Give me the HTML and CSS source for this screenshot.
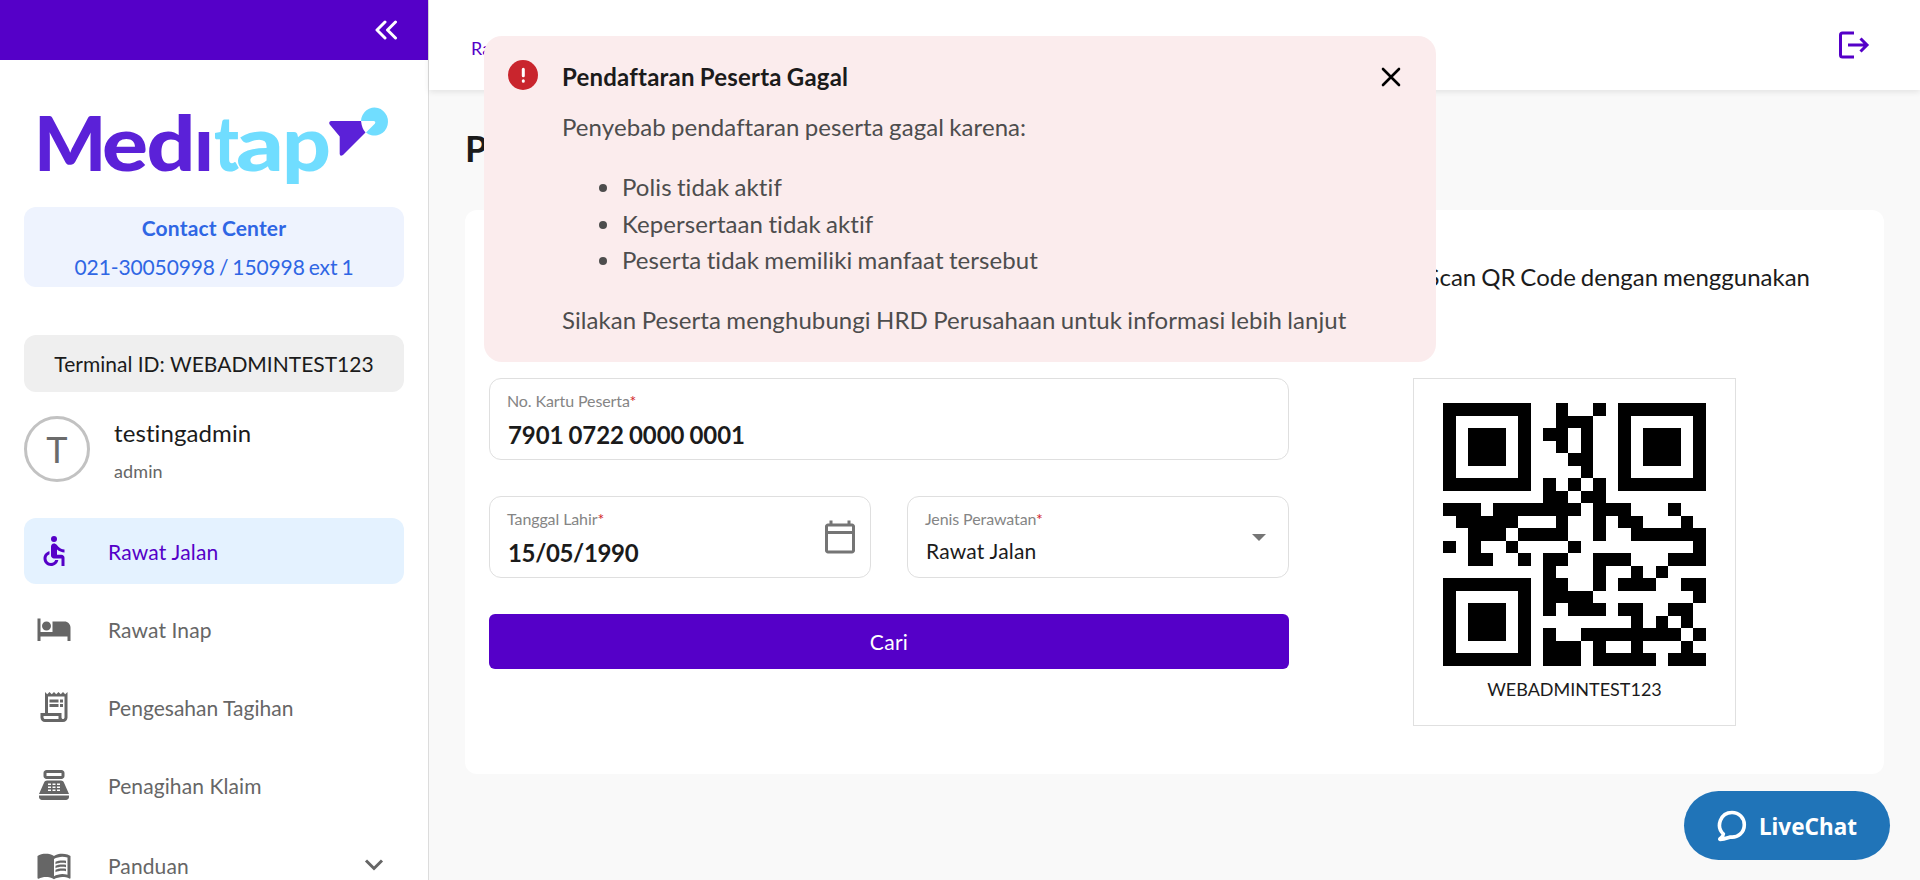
FILE: index.html
```html
<!DOCTYPE html>
<html lang="id">
<head>
<meta charset="utf-8">
<title>Meditap</title>
<link rel="stylesheet" href="styles.css">
</head>
<body>
<div class="app">
  <aside class="sidebar">
    <div class="sidebar-top">
      <svg class="collapse" width="24" height="20" viewBox="0 0 24 20"><path d="M11 2 3 10l8 8M21.500 2l-8 8 8 8"/></svg>
    </div>
    <div class="sidebar-body">
      <svg class="logo" width="380" height="98" viewBox="24 94 380 98" role="img" aria-label="Meditap">
        <text class="logo-medi" y="171"><tspan x="34">M</tspan><tspan x="102" textLength="46" lengthAdjust="spacingAndGlyphs">e</tspan><tspan x="146.500" textLength="49" lengthAdjust="spacingAndGlyphs">d</tspan><tspan x="194">ı</tspan></text>
        <text class="logo-tap" y="171"><tspan x="214" textLength="25" lengthAdjust="spacingAndGlyphs">t</tspan><tspan x="236" textLength="48" lengthAdjust="spacingAndGlyphs">a</tspan><tspan x="282" textLength="49" lengthAdjust="spacingAndGlyphs">p</tspan></text>
        <path class="logo-dark" d="M331 121h30q1 8 4.500 11.500l-22.500 22.500q-3 2-3.300-1v-17.500l-10-12q-1.500-2.500 1.300-3.500z"/>
        <path class="logo-light" d="M361 121a13.500 14 0 1 1 5 11.500l9-9q1-2.500-1.500-2.500z"/>
      </svg>
      <div class="contact"><strong>Contact Center</strong><span>021-30050998 / 150998 ext 1</span></div>
      <div class="terminal">Terminal ID: WEBADMINTEST123</div>
      <div class="user">
        <div class="avatar">T</div>
        <div class="user-info"><span class="user-name">testingadmin</span><span class="user-role">admin</span></div>
      </div>
      <nav class="menu">
        <a class="item active">
          <svg class="mi" viewBox="0 0 24 24"><circle cx="12" cy="4" r="2"/><path d="M19 13v-2c-1.540.02-3.090-.75-4.070-1.830l-1.290-1.430c-.17-.19-.38-.34-.61-.45-.01 0-.01-.01-.02-.01H13c-.35-.2-.75-.3-1.190-.26C10.760 7.110 10 8.040 10 9.090V15c0 1.100.9 2 2 2h5v5h2v-5.500c0-1.100-.9-2-2-2h-3v-3.450c1.290 1.070 3.250 1.940 5 1.950zm-6.170 5c-.41 1.160-1.520 2-2.830 2-1.660 0-3-1.340-3-3 0-1.310.84-2.410 2-2.830V12.100c-2.280.46-4 2.480-4 4.900 0 2.760 2.240 5 5 5 2.420 0 4.440-1.720 4.900-4h-2.070z"/></svg>
          <span>Rawat Jalan</span></a>
        <a class="item">
          <svg class="mi" viewBox="0 0 24 24"><path d="M7 13c1.660 0 3-1.340 3-3S8.660 7 7 7s-3 1.340-3 3 1.340 3 3 3zm12-6h-8v7H3V5H1v15h2v-3h18v3h2v-9c0-2.210-1.790-4-4-4z"/></svg>
          <span>Rawat Inap</span></a>
        <a class="item">
          <svg class="mi" viewBox="0 0 24 24"><path d="M19.500 3.500 18 2l-1.500 1.500L15 2l-1.500 1.500L12 2l-1.500 1.500L9 2 7.500 3.500 6 2v14H3v3c0 1.660 1.340 3 3 3h12c1.660 0 3-1.340 3-3V2l-1.500 1.500zM15 20H6c-.55 0-1-.45-1-1v-1h10v2zm4-1c0 .55-.45 1-1 1s-1-.45-1-1v-3H8V5h11v14z"/><path d="M9 7h6v2H9zM16 7h2v2h-2zM9 10h6v2H9zM16 10h2v2h-2z"/></svg>
          <span class="tight">Pengesahan Tagihan</span></a>
        <a class="item">
          <svg class="mi" viewBox="0 0 24 24"><path fill-rule="evenodd" d="M17 2H7c-1.100 0-2 .9-2 2v2c0 1.100.9 2 2 2h10c1.100 0 2-.9 2-2V4c0-1.100-.9-2-2-2zm0 4H7V4h10v2zm3 16H4c-1.100 0-2-.9-2-2v-1h20v1c0 1.100-.9 2-2 2zM18.530 10.190C18.210 9.470 17.490 9 16.700 9H7.300c-.79 0-1.510.47-1.830 1.190L2 18h20zM8 11h2v1H8zm3 0h2v1h-2zm3 0h2v1h-2zM8 13h2v1H8zm3 0h2v1h-2zm3 0h2v1h-2zM8 15h2v1H8zm3 0h2v1h-2zm3 0h2v1h-2z"/></svg>
          <span>Penagihan Klaim</span></a>
        <a class="item group">
          <svg class="mi" viewBox="0 0 24 24"><path d="M21 5c-1.110-.35-2.330-.5-3.500-.5-1.950 0-4.050.4-5.500 1.500-1.450-1.100-3.550-1.500-5.500-1.500S2.450 4.900 1 6v14.650c0 .25.25.5.5.5.1 0 .15-.05.25-.05C3.100 20.450 5.050 20 6.500 20c1.950 0 4.050.4 5.500 1.500 1.350-.85 3.800-1.500 5.500-1.500 1.650 0 3.350.3 4.750 1.050.1.05.15.05.25.05.25 0 .5-.25.5-.5V6c-.6-.45-1.250-.75-2-1zm0 13.500c-1.100-.35-2.300-.5-3.500-.5-1.700 0-4.150.65-5.500 1.500V8c1.350-.85 3.800-1.500 5.500-1.500 1.200 0 2.400.15 3.500.5v11.500z"/><path d="M17.500 10.500c.88 0 1.730.09 2.500.26V9.240c-.79-.15-1.640-.24-2.500-.24-1.700 0-3.240.29-4.500.83v1.660c1.130-.64 2.700-.99 4.500-.99zM13 12.490v1.660c1.130-.64 2.700-.99 4.500-.99.88 0 1.730.09 2.500.26V11.900c-.79-.15-1.640-.24-2.500-.24-1.700 0-3.240.3-4.500.83zM17.500 14.330c-1.700 0-3.240.29-4.500.83v1.660c1.130-.64 2.700-.99 4.500-.99.88 0 1.730.09 2.500.26v-1.520c-.79-.16-1.640-.24-2.500-.24z"/></svg>
          <span>Panduan</span>
          <svg class="chev" width="20" height="14" viewBox="0 0 20 14"><path d="m2 2.500 8 8 8-8"/></svg></a>
      </nav>
    </div>
  </aside>

  <div class="main">
    <header class="topbar">
      <span class="crumb">Rawat Jalan</span>
      <svg class="logout" width="36" height="36" viewBox="0 0 36 36"><path d="M18 6H6.500Q4.500 6 4.500 8v20q0 2 2 2H18"/><path d="M12 18h19M24.500 11.500 31 18l-6.500 6.500"/></svg>
    </header>
    <main class="content">
      <h1 class="title">Pendaftaran Peserta</h1>
      <section class="card">
        <form class="form">
          <div class="field wide"><label>No. Kartu Peserta<em>*</em></label><b>7901 0722 0000 0001</b></div>
          <div class="field"><label>Tanggal Lahir<em>*</em></label><b class="date">15/05/1990</b>
            <svg class="cal" viewBox="0 0 24 24"><path d="M20 3h-1V1h-2v2H7V1H5v2H4c-1.100 0-2 .9-2 2v16c0 1.100.9 2 2 2h16c1.100 0 2-.9 2-2V5c0-1.100-.9-2-2-2zm0 18H4V10h16v11zm0-13H4V5h16v3z"/></svg>
          </div>
          <div class="field"><label>Jenis Perawatan<em>*</em></label><span class="sel">Rawat Jalan</span>
            <svg class="drop" viewBox="0 0 14 7"><path d="M0 0h14L7 7z"/></svg>
          </div>
          <button class="btn wide" type="button">Cari</button>
        </form>
        <div class="scan">
          <p class="scan-text">Scan QR Code dengan menggunakan</p>
          <div class="qr-box">
            <svg id="qr" width="263" height="263" viewBox="0 0 263 263"></svg>
            <span>WEBADMINTEST123</span>
          </div>
        </div>
      </section>
    </main>
  </div>
</div>

<div class="alert" role="alert">
  <svg class="alert-icon" width="30" height="30" viewBox="0 0 30 30"><circle cx="15" cy="15" r="15"/><path d="M15.300 9.200v6.500M15.300 20.800v.4"/></svg>
  <div class="alert-body">
    <strong>Pendaftaran Peserta Gagal</strong>
    <p>Penyebab pendaftaran peserta gagal karena:</p>
    <ul><li>Polis tidak aktif</li><li>Kepersertaan tidak aktif</li><li>Peserta tidak memiliki manfaat tersebut</li></ul>
    <p>Silakan Peserta menghubungi HRD Perusahaan untuk informasi lebih lanjut</p>
  </div>
  <svg class="alert-close" width="20" height="20" viewBox="0 0 20 20"><path d="m2 2 16 16M18 2 2 18"/></svg>
</div>

<div class="chat">
  <svg width="30" height="32" viewBox="0 0 30 32"><path d="M6.400 24C-1.500 16.500 3.500 2.500 15 2.500c7 0 12.300 5.500 12.300 12.200C27.300 22.500 21 28 13.300 27c-3 1-6.500 2.500-10.300 2.400C2 28.600 6.200 27.500 6.400 24z"/></svg>
  <span>LiveChat</span>
</div>
<script src="qr.js"></script>
</body>
</html>
```

FILE: styles.css
```css
* { box-sizing: border-box; }
body { margin: 0; height: 880px; overflow: hidden; font-family: Lato, "Open Sans", sans-serif; font-size: 21px; color: #1b1b1b; background: #f9f9f9; font-variant-ligatures: none; }
p, ul, h1 { margin: 0; }
.app { display: flex; height: 880px; }

.sidebar { width: 429px; flex: none; background: #fff; border-right: 1px solid #dcdcdc; overflow: hidden; }
.sidebar-top { height: 60px; background: #5500c8; display: flex; justify-content: flex-end; align-items: center; padding-right: 30px; }
.collapse { fill: none; stroke: #fff; stroke-width: 3; stroke-linecap: round; stroke-linejoin: round; }
.sidebar-body { padding: 34px 24px 0; display: flex; flex-direction: column; }
.logo { display: block; overflow: visible; }
.logo text { font: 900 76px Lato, sans-serif; }
.logo-medi, .logo-dark { fill: #5b21d8; }
.logo-tap, .logo-light { fill: #70ddff; }
.contact { margin-top: 15px; height: 80px; border-radius: 12px; background: #eef3fe; color: #2f66e4; display: flex; flex-direction: column; align-items: center; justify-content: center; gap: 7px; line-height: 32px; }
.contact strong { letter-spacing: .15px; }
.contact span { letter-spacing: -.12px; word-spacing: -1.200px; }
.terminal { margin-top: 48px; height: 57px; border-radius: 12px; background: #efefef; display: flex; align-items: center; justify-content: center; }
.user { display: flex; gap: 24px; align-items: center; margin-top: 24px; height: 66px; }
.avatar { width: 66px; height: 66px; border: 3px solid #c2c2c2; border-radius: 50%; display: flex; align-items: center; justify-content: center; font-size: 36px; color: #6b6b6b; }
.user-info { display: flex; flex-direction: column; gap: 11px; padding-top: 4px; }
.user-name { font-size: 24px; line-height: 29px; letter-spacing: .1px; }
.user-role { font-size: 18px; line-height: 27px; color: #666; letter-spacing: .1px; }
.menu { margin-top: 36px; display: flex; flex-direction: column; gap: 12px; }
.item { height: 66px; display: flex; align-items: center; padding: 0 20px 0 12px; border-radius: 12px; color: #666; letter-spacing: .1px; }
.item span { margin-left: 36px; flex: 1; }
.item .tight { letter-spacing: .02px; }
.item.active { background: #e4f2ff; color: #5500c8; letter-spacing: .2px; }
.item.group { margin-top: 2px; }
.mi { width: 36px; height: 36px; fill: currentColor; }
.chev { fill: none; stroke: #666; stroke-width: 3; }

.main { flex: 1; display: flex; flex-direction: column; }
.topbar { height: 90px; flex: none; background: #fff; box-shadow: 0 2px 6px rgba(0, 0, 0, .09); display: flex; align-items: center; justify-content: space-between; padding: 0 48px 0 42px; }
.crumb { font-size: 18px; color: #5500c8; padding-top: 6px; }
.logout { fill: none; stroke: #5500c8; stroke-width: 3; }
.content { padding: 36px 36px 0; }
.title { font-size: 36px; line-height: 44px; font-weight: 700; }
.card { margin-top: 40px; height: 564px; background: #fff; border-radius: 12px; padding: 0 24px; display: grid; grid-template-columns: 800px 1fr; }
.form { padding-top: 168px; display: grid; grid-template-columns: 1fr 1fr; gap: 36px; align-content: start; }
.wide { grid-column: 1 / -1; }
.field { height: 82px; border: 1px solid #dfdfdf; border-radius: 12px; padding: 9px 17px; position: relative; display: flex; flex-direction: column; align-items: flex-start; }
.field label { font-size: 16px; line-height: 26px; color: #858585; letter-spacing: -.1px; }
.field em { color: #d2232a; font-style: normal; }
.field b { font-size: 24px; line-height: 29px; margin: 6px 0 0 1px; letter-spacing: -.05px; word-spacing: -.8px; }
.field b.date { letter-spacing: -.35px; }
.field .sel { line-height: 26px; margin: 6px 0 0 1px; letter-spacing: .2px; }
.cal { position: absolute; width: 36px; height: 36px; right: 12px; top: 22px; fill: #757575; }
.drop { position: absolute; width: 14px; height: 7px; right: 22px; top: 37px; fill: #757575; }
.btn { height: 55px; border: 0; border-radius: 6px; background: #5500c8; color: #fff; font: 21px Lato, sans-serif; letter-spacing: .3px; }
.scan { padding-top: 47px; display: flex; flex-direction: column; align-items: center; }
.scan-text { font-size: 24px; line-height: 40px; width: 471px; text-align: right; word-spacing: -1.200px; }
.qr-box { margin-top: 81px; width: 323px; height: 348px; border: 1px solid #e0e0e0; padding-top: 24px; display: flex; flex-direction: column; align-items: center; font-size: 18px; }
.qr-box span { margin-top: 12px; }

.alert { position: absolute; left: 484px; top: 36px; width: 952px; height: 326px; border-radius: 18px; background: #fbeced; color: #4d4d4d; padding: 24px 35px 0 24px; display: flex; align-items: flex-start; font-size: 24px; line-height: 36px; letter-spacing: .08px; word-spacing: -.9px; }
.alert-icon { fill: #c9252d; }
.alert-icon path { stroke: #fff; stroke-width: 3; stroke-linecap: round; }
.alert-body { flex: 1; margin-left: 24px; }
.alert-body strong { display: block; color: #1b1b1b; line-height: 34px; margin-bottom: 15px; letter-spacing: .2px; }
.alert-body ul { margin: 24px 0 23.500px; padding-left: 60px; line-height: 36.500px; }
.alert-close { margin-top: 7px; fill: none; stroke: #000; stroke-width: 2.600; stroke-linecap: round; }

.chat { position: absolute; left: 1684px; top: 791px; width: 206px; height: 69px; border-radius: 35px; background: #2074b8; color: #fff; display: flex; align-items: center; gap: 12px; padding-left: 33px; font: 700 22.500px "Noto Sans", sans-serif; }
.chat svg { fill: none; stroke: #fff; stroke-width: 3.600; stroke-linejoin: round; }
.chat span { padding-top: 1px; }
```

FILE: qr.js
```js
const rows = [
  "111111100100101111111",
  "100000100111001000001",
  "101110101101001011101",
  "101110100101001011101",
  "101110100011001011101",
  "100000100001001000001",
  "111111101010101111111",
  "000000001101100000000",
  "111011111110111000100",
  "011111000100101100010",
  "001110111100100111111",
  "101001000010000000001",
  "001100101100111000111",
  "000000001000100101000",
  "111111101100101110011",
  "100000101111000000001",
  "101110101011101100110",
  "101110100000000101010",
  "101110101001111111101",
  "100000101110100100010",
  "111111101110111110111"
];

// Modules are 12.5px; adjacent dark modules in a row are merged into one run.
let d = "";
rows.forEach((row, y) => {
  for (const run of row.matchAll(/1+/g)) {
    const w = run[0].length * 12.5;
    d += `M${run.index * 12.5} ${y * 12.5}h${w}v12.5h-${w}z`;
  }
});
const path = document.createElementNS("http://www.w3.org/2000/svg", "path");
path.setAttribute("d", d);
path.setAttribute("shape-rendering", "crispEdges");
document.getElementById("qr").appendChild(path);
```
